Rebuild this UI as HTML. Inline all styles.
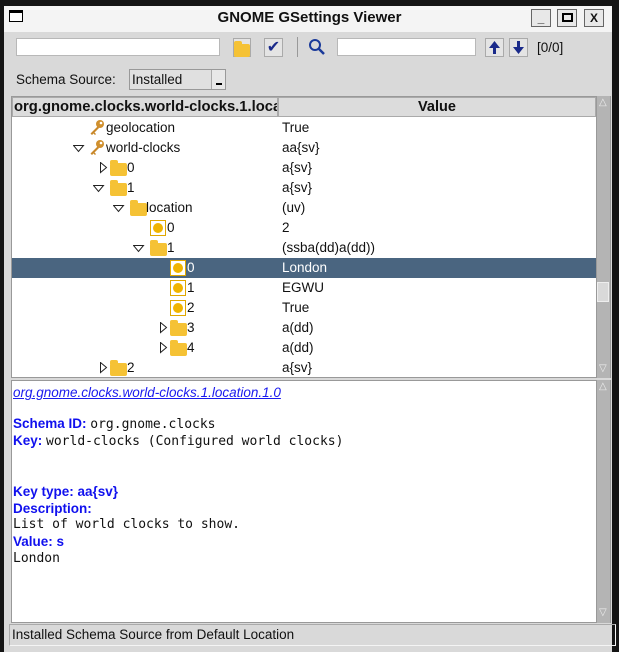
<!DOCTYPE html>
<html><head><meta charset="utf-8"><style>
*{box-sizing:border-box;margin:0;padding:0}
body{width:619px;height:652px;background:#141414;position:relative;overflow:hidden;font-family:"Liberation Sans","DejaVu Sans",sans-serif;font-size:13.5px;color:#111}
.a{position:absolute}
#win{left:4px;top:6px;width:608px;height:646px;background:#d9d9d9}
#title{left:4px;top:6px;width:608px;height:26px;background:#f4f4f4}
.tb{top:9px;width:20px;height:18px;border:1px solid #666;background:#e8e8e8;font-size:12px;text-align:center;line-height:16px;font-weight:bold}
.entry{background:#fff;border:1px solid #b8b8b8}
.row{position:absolute;left:0;width:585px;height:20px;line-height:20px}
.row span{position:absolute}
.fold{position:absolute;width:17px;height:13px;background:#f5c235;border-radius:2px;top:5px}
.fold:before{content:"";position:absolute;left:0;top:-3px;width:8px;height:4px;background:#f5c235;border-radius:2px 2px 0 0}
.circ{position:absolute;width:16px;height:16px;border:1px solid #e0a800;top:2px;background:#fff}
.circ:after{content:"";position:absolute;left:2px;top:2px;width:10px;height:10px;border-radius:50%;background:#f0b400}
.row svg{position:absolute}
.sb{background:#b4b4b4;border-left:1px solid #999}
.mono{font-family:"DejaVu Sans Mono","Liberation Mono",monospace;font-size:13px}
.lbl{color:#1010ee;font-weight:bold;font-size:13.5px}
.dl{position:absolute;left:2px;white-space:nowrap}
</style></head><body>
<div class="a" id="win"></div>
<div class="a" id="title"></div>
<div class="a" style="left:9px;top:10px;width:14px;height:12px;border:1px solid #000;border-top:3px solid #000;background:#fff"></div>
<div class="a" style="left:0;top:9px;width:619px;text-align:center;font-weight:bold;font-size:15px">GNOME GSettings Viewer</div>
<div class="a tb" style="left:531px">_</div>
<div class="a tb" style="left:557px"><div style="width:11px;height:9px;border:2px solid #000;margin:3px auto"></div></div>
<div class="a tb" style="left:584px">X</div>

<div class="a entry" style="left:16px;top:38px;width:204px;height:18px"></div>
<div class="a" style="left:233px;top:38px;width:18px;height:19px;background:#e4e4e4;border:1px solid #aaa"><div class="fold" style="left:0;top:5px;width:16px"></div></div>
<div class="a" style="left:264px;top:38px;width:19px;height:19px;background:#e4e4e4;border:1px solid #aaa;color:#1a2a8a;font-size:16px;text-align:center;line-height:17px">✔</div>
<div class="a" style="left:297px;top:37px;width:1px;height:20px;background:#999"></div>
<svg class="a" style="left:308px;top:38px" width="18" height="18"><circle cx="7" cy="7" r="5" fill="none" stroke="#1a3a9a" stroke-width="2"/><line x1="11" y1="11" x2="16" y2="16" stroke="#1a3a9a" stroke-width="2.5"/></svg>
<div class="a entry" style="left:337px;top:38px;width:139px;height:18px"></div>
<svg class="a" style="left:485px;top:38px" width="19" height="19"><rect x="0.5" y="0.5" width="18" height="18" fill="#e4e4e4" stroke="#aaa"/><path d="M9.5 3L4 10H8V16H11V10H15Z" fill="#1a2a8a"/></svg>
<svg class="a" style="left:509px;top:38px" width="19" height="19"><rect x="0.5" y="0.5" width="18" height="18" fill="#e4e4e4" stroke="#aaa"/><path d="M9.5 16L4 9H8V3H11V9H15Z" fill="#1a2a8a"/></svg>
<div class="a" style="left:537px;top:40px">[0/0]</div>

<div class="a" style="left:16px;top:72px">Schema Source:</div>
<div class="a" style="left:129px;top:69px;width:97px;height:21px;border:1px solid #999;background:#e0e0e0;padding:2px 0 0 2px">Installed</div>
<div class="a" style="left:211px;top:70px;width:14px;height:19px;background:#e8e8e8;border-left:1px solid #aaa"><div style="position:absolute;left:4px;top:13px;width:6px;height:2px;background:#000"></div></div>

<div class="a" style="left:11px;top:96px;width:600px;height:282px;background:#fff;border:1px solid #999"></div>
<div class="a" style="left:12px;top:97px;width:266px;height:20px;background:#dcdcdc;border:1px solid #aaa;font-weight:bold;font-size:14.8px;line-height:18px;overflow:hidden;white-space:nowrap;padding-left:1px">org.gnome.clocks.world-clocks.1.location</div>
<div class="a" style="left:278px;top:97px;width:318px;height:20px;background:#dcdcdc;border:1px solid #aaa;font-weight:bold;font-size:14.5px;line-height:18px;text-align:center">Value</div>
<div class="a sb" style="left:596px;top:96px;width:14px;height:282px"></div>
<div class="a" style="left:597px;top:282px;width:12px;height:20px;background:#d9d9d9;border:1px solid #eee"></div>
<div class="a" style="left:599px;top:97px;font-size:10px;color:#eee">△</div>
<div class="a" style="left:599px;top:363px;font-size:10px;color:#eee">▽</div>

<svg width="0" height="0" style="position:absolute"><defs>
<g id="key"><circle cx="11" cy="5" r="4" fill="#d0902e"/><circle cx="12" cy="4" r="1.3" fill="#fff"/><path d="M8.5 7.5L1.5 14.5L3 16L4.5 14.5L6 16L7 15L5.5 13.5L10 9Z" fill="#c8882a"/></g>
<g id="dn"><path d="M0.5 0.5H10.5L5.5 6.5Z" fill="#fff" stroke="#222"/></g>
<g id="rt"><path d="M0.5 0.5V10.5L6.5 5.5Z" fill="#fff" stroke="#222"/></g>
</defs></svg>

<div class="a" style="left:12px;top:118px;width:584px;height:259px;overflow:hidden">
<div class="row" style="top:0"><svg style="left:77px;top:1px" width="17" height="17"><use href="#key"/></svg><span style="left:94px">geolocation</span><span style="left:270px">True</span></div>
<div class="row" style="top:20px"><svg style="left:61px;top:7px" width="12" height="8"><use href="#dn"/></svg><svg style="left:77px;top:1px" width="17" height="17"><use href="#key"/></svg><span style="left:94px">world-clocks</span><span style="left:270px">aa{sv}</span></div>
<div class="row" style="top:40px"><svg style="left:88px;top:4px" width="8" height="12"><use href="#rt"/></svg><i class="fold" style="left:98px"></i><span style="left:115px">0</span><span style="left:270px">a{sv}</span></div>
<div class="row" style="top:60px"><svg style="left:81px;top:7px" width="12" height="8"><use href="#dn"/></svg><i class="fold" style="left:98px"></i><span style="left:115px">1</span><span style="left:270px">a{sv}</span></div>
<div class="row" style="top:80px"><svg style="left:101px;top:7px" width="12" height="8"><use href="#dn"/></svg><i class="fold" style="left:118px"></i><span style="left:134px">location</span><span style="left:270px">(uv)</span></div>
<div class="row" style="top:100px"><i class="circ" style="left:138px"></i><span style="left:155px">0</span><span style="left:270px">2</span></div>
<div class="row" style="top:120px"><svg style="left:121px;top:7px" width="12" height="8"><use href="#dn"/></svg><i class="fold" style="left:138px"></i><span style="left:155px">1</span><span style="left:270px">(ssba(dd)a(dd))</span></div>
<div class="row" style="top:140px;background:#4a6580;color:#fff"><i class="circ" style="left:158px"></i><span style="left:175px">0</span><span style="left:270px">London</span></div>
<div class="row" style="top:160px"><i class="circ" style="left:158px"></i><span style="left:175px">1</span><span style="left:270px">EGWU</span></div>
<div class="row" style="top:180px"><i class="circ" style="left:158px"></i><span style="left:175px">2</span><span style="left:270px">True</span></div>
<div class="row" style="top:200px"><svg style="left:148px;top:4px" width="8" height="12"><use href="#rt"/></svg><i class="fold" style="left:158px"></i><span style="left:175px">3</span><span style="left:270px">a(dd)</span></div>
<div class="row" style="top:220px"><svg style="left:148px;top:4px" width="8" height="12"><use href="#rt"/></svg><i class="fold" style="left:158px"></i><span style="left:175px">4</span><span style="left:270px">a(dd)</span></div>
<div class="row" style="top:240px"><svg style="left:88px;top:4px" width="8" height="12"><use href="#rt"/></svg><i class="fold" style="left:98px"></i><span style="left:115px">2</span><span style="left:270px">a{sv}</span></div>
</div>

<div class="a" style="left:11px;top:380px;width:600px;height:243px;background:#fff;border:1px solid #999"></div>
<div class="a sb" style="left:596px;top:380px;width:14px;height:243px"></div>
<div class="a" style="left:599px;top:381px;font-size:10px;color:#eee">△</div>
<div class="a" style="left:599px;top:607px;font-size:10px;color:#eee">▽</div>
<div class="a" style="left:11px;top:385px;width:585px;height:236px">
<div class="dl" style="top:0;color:#1a1aee;font-style:italic;text-decoration:underline">org.gnome.clocks.world-clocks.1.location.1.0</div>
<div class="dl" style="top:31px"><span class="lbl">Schema ID: </span><span class="mono">org.gnome.clocks</span></div>
<div class="dl" style="top:48px"><span class="lbl">Key: </span><span class="mono">world-clocks (Configured world clocks)</span></div>
<div class="dl lbl" style="top:99px">Key type: aa{sv}</div>
<div class="dl lbl" style="top:116px">Description:</div>
<div class="dl mono" style="top:132px">List of world clocks to show.</div>
<div class="dl lbl" style="top:149px">Value: s</div>
<div class="dl mono" style="top:166px">London</div>
</div>

<div class="a" style="left:9px;top:624px;width:607px;height:22px;border:1px solid #f4f4f4;border-top-color:#aaa;border-left-color:#aaa;padding:2px 0 0 2px">Installed Schema Source from Default Location</div>
</body></html>
